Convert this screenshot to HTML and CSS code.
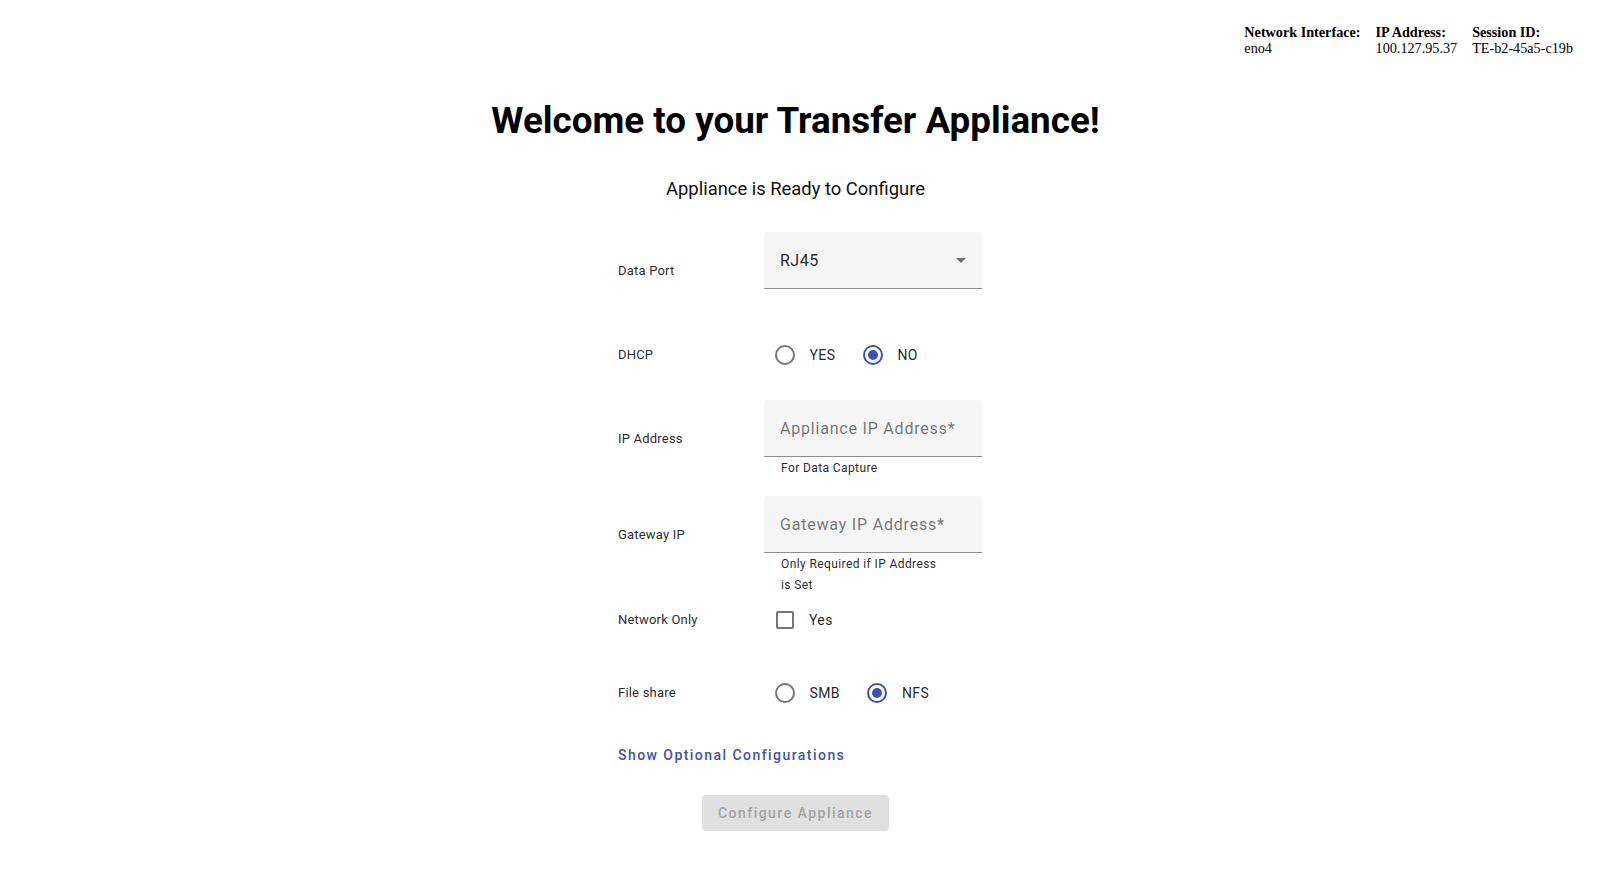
FILE: index.html
```html
<!DOCTYPE html>
<html lang="en">
<head>
<meta charset="utf-8">
<title>Transfer Appliance</title>
<link rel="stylesheet" href="styles.css">
</head>
<body>
<header class="session-info">
  <div class="info-grid">
    <span class="info-head">Network Interface:</span>
    <span class="info-head">IP Address:</span>
    <span class="info-head">Session ID:</span>
    <span class="info-val">eno4</span>
    <span class="info-val">100.127.95.37</span>
    <span class="info-val">TE-b2-45a5-c19b</span>
  </div>
</header>
<main class="setup">
  <h1 class="title">Welcome to your Transfer Appliance!</h1>
  <p class="subtitle">Appliance is Ready to Configure</p>
  <form class="config-form">
    <div class="form-row row-field">
      <div class="row-label">Data Port</div>
      <div class="field-wrap">
        <div class="field">
          <span class="field-value">RJ45</span>
          <span class="select-arrow"></span>
        </div>
        <div class="subscript"></div>
      </div>
    </div>

    <div class="form-row row-choice row-dhcp">
      <div class="row-label">DHCP</div>
      <div class="choices">
        <span class="choice"><span class="radio"></span><span class="choice-text">YES</span></span>
        <span class="choice"><span class="radio checked"></span><span class="choice-text">NO</span></span>
      </div>
    </div>

    <div class="form-row row-field row-ip">
      <div class="row-label">IP Address</div>
      <div class="field-wrap">
        <div class="field">
          <span class="placeholder">Appliance IP Address*</span>
        </div>
        <div class="subscript"><span class="hint">For Data Capture</span></div>
      </div>
    </div>

    <div class="form-row row-field">
      <div class="row-label">Gateway IP</div>
      <div class="field-wrap">
        <div class="field">
          <span class="placeholder">Gateway IP Address*</span>
        </div>
        <div class="subscript"><span class="hint">Only Required if IP Address is Set</span></div>
      </div>
    </div>

    <div class="form-row row-choice row-network">
      <div class="row-label">Network Only</div>
      <div class="choices">
        <span class="choice"><span class="checkbox"></span><span class="choice-text check-text">Yes</span></span>
      </div>
    </div>

    <div class="form-row row-choice row-share">
      <div class="row-label">File share</div>
      <div class="choices">
        <span class="choice"><span class="radio"></span><span class="choice-text">SMB</span></span>
        <span class="choice"><span class="radio checked"></span><span class="choice-text">NFS</span></span>
      </div>
    </div>

    <div class="optional-link">Show Optional Configurations</div>
  </form>
  <div class="actions">
    <button class="configure-btn" type="button" disabled>Configure Appliance</button>
  </div>
</main>
</body>
</html>
```
FILE: styles.css
```css
html, body {
  margin: 0;
  padding: 0;
  background: #ffffff;
}

body {
  font-family: Roboto, "Noto Sans", Arial, sans-serif;
  color: rgba(0, 0, 0, 0.87);
}

/* Top-right session info */
.session-info {
  display: flex;
  justify-content: flex-end;
  padding: 24px 27px 0 0;
  font-family: "Liberation Serif", "Times New Roman", serif;
  font-size: 14.2px;
  line-height: 16px;
  color: #000;
}

.info-grid {
  display: grid;
  grid-template-columns: auto auto auto;
  column-gap: 15px;
}

.info-head {
  font-weight: bold;
}

/* Main column */
.setup {
  padding: 0 9px 0 0;
}

.title {
  margin: 43px 0 0;
  text-align: center;
  font-size: 36.8px;
  line-height: 44px;
  font-weight: 700;
  color: #000;
}

.subtitle {
  margin: 34px 0 0;
  text-align: center;
  font-size: 18.4px;
  line-height: 24px;
  color: #111;
}

.config-form {
  width: 364px;
  margin: 31px auto 0;
  padding-left: 9px;
}

.form-row {
  display: grid;
  grid-template-columns: 146px 218px;
}

.row-label {
  font-size: 13px;
  letter-spacing: 0.2px;
  line-height: 20px;
  color: rgba(0, 0, 0, 0.87);
  display: flex;
  align-items: center;
}

.row-field .row-label {
  height: 78px;
  align-self: start;
}

.row-ip {
  margin-bottom: 18px;
}

.field {
  height: 56px;
  background: #f5f5f5;
  border-radius: 4px 4px 0 0;
  border-bottom: 1px solid rgba(0, 0, 0, 0.42);
  display: flex;
  align-items: center;
  padding: 0 16px;
}

.field-value {
  flex: 1;
  font-size: 16px;
  letter-spacing: 0.5px;
  color: rgba(0, 0, 0, 0.87);
}

.placeholder {
  font-size: 16px;
  letter-spacing: 0.8px;
  color: rgba(0, 0, 0, 0.55);
}

.select-arrow {
  width: 0;
  height: 0;
  border-left: 5px solid transparent;
  border-right: 5px solid transparent;
  border-top: 5px solid rgba(0, 0, 0, 0.54);
}

.subscript {
  min-height: 20px;
  padding: 1px 16px 0 17px;
}

.hint {
  display: block;
  max-width: 160px;
  font-size: 12px;
  line-height: 20.4px;
  letter-spacing: 0.4px;
  color: rgba(0, 0, 0, 0.87);
}

/* Radio / checkbox rows */
.row-choice {
  align-items: center;
}

.row-dhcp {
  height: 90px;
}

.row-network {
  height: 50px;
}

.row-share {
  height: 40px;
  margin-top: 28px;
}

.choices {
  display: flex;
  align-items: center;
  padding-left: 11px;
}

.choice {
  display: inline-flex;
  align-items: center;
  margin-right: 27.5px;
}

.choice-text {
  margin-left: 14.5px;
  font-size: 14px;
  line-height: 20px;
  letter-spacing: 0.4px;
  color: rgba(0, 0, 0, 0.87);
}

.radio {
  box-sizing: border-box;
  width: 20px;
  height: 20px;
  border-radius: 50%;
  border: 2px solid rgba(0, 0, 0, 0.54);
  display: inline-flex;
  align-items: center;
  justify-content: center;
}

.radio.checked {
  border-color: #3f51b5;
}

.radio.checked::after {
  content: "";
  width: 10px;
  height: 10px;
  border-radius: 50%;
  background: #3f51b5;
}

.checkbox {
  box-sizing: border-box;
  width: 18px;
  height: 18px;
  margin-left: 1px;
  border: 2px solid rgba(0, 0, 0, 0.54);
  border-radius: 2px;
}

.check-text {
  margin-left: 15px;
}

.optional-link {
  margin-top: 24px;
  height: 36px;
  display: flex;
  align-items: center;
  font-size: 14px;
  font-weight: 500;
  letter-spacing: 1.45px;
  color: #3f51b5;
}

.actions {
  display: flex;
  justify-content: center;
  margin-top: 22px;
}

.configure-btn {
  height: 36px;
  padding: 0 16px;
  border: none;
  border-radius: 4px;
  background: #e0e0e0;
  font-family: Roboto, "Noto Sans", Arial, sans-serif;
  font-size: 14px;
  font-weight: 500;
  letter-spacing: 1.48px;
  color: #a3a3a3;
}
```
